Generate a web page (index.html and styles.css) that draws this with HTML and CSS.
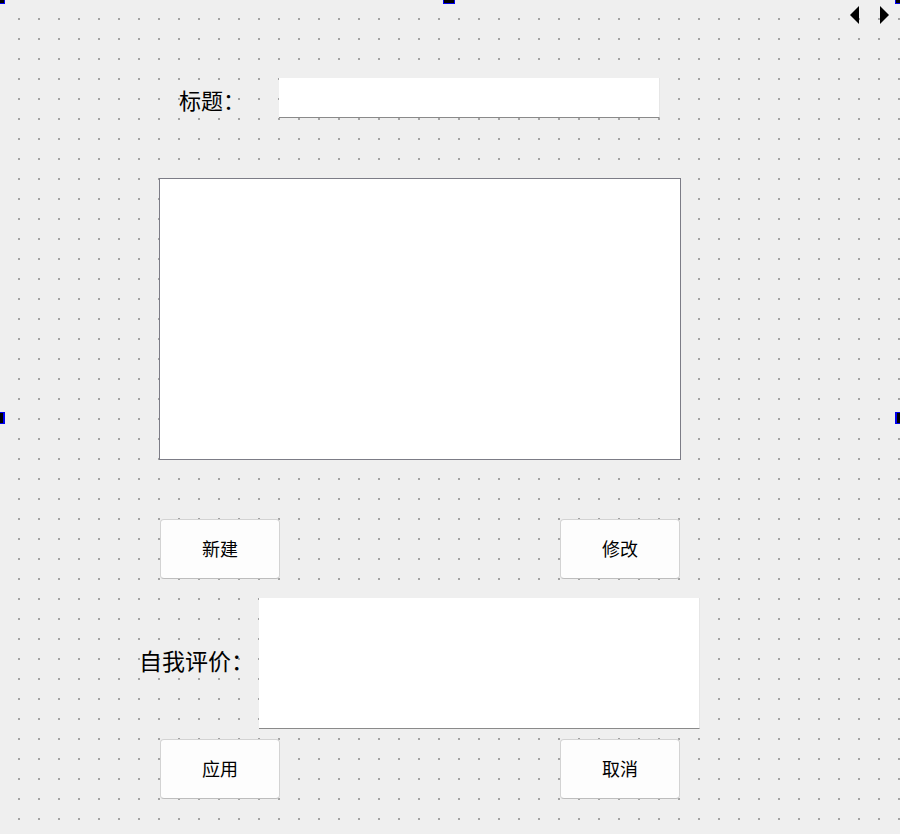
FILE: index.html
```html
<!DOCTYPE html>
<html lang="zh-CN">
<head>
  <meta charset="UTF-8">
  <meta name="viewport" content="width=device-width, initial-scale=1.0">
  <title>Form</title>
  <link rel="stylesheet" href="styles.css">
</head>
<body>
  <div class="canvas">
    <span class="handle handle-tl"></span>
    <span class="handle handle-top"></span>
    <span class="handle handle-tr"></span>
    <span class="handle handle-left"></span>
    <span class="handle handle-right"></span>

    <div class="scroll-arrows">
      <span class="arrow arrow-left"></span>
      <span class="arrow arrow-right"></span>
    </div>

    <div class="title-row">
      <label class="title-label" for="title">标题：</label>
      <input id="title" class="line-edit" type="text">
    </div>

    <textarea class="editor"></textarea>

    <div class="btn-row">
      <button class="push-btn">新建</button>
      <button class="push-btn">修改</button>
    </div>

    <div class="eval-row">
      <label class="eval-label" for="eval">自我评价：</label>
      <textarea id="eval" class="eval-edit"></textarea>
    </div>

    <div class="btn-row btn-row-last">
      <button class="push-btn">应用</button>
      <button class="push-btn">取消</button>
    </div>
  </div>
</body>
</html>
```

FILE: styles.css
```css
body {
  margin: 0;
  font-family: "Noto Sans CJK SC", "Noto Sans", sans-serif;
  color: #000;
  background-color: #efefef;
}

.canvas {
  position: relative;
  width: 900px;
  height: 834px;
  overflow: hidden;
  box-sizing: border-box;
  padding-top: 78px;
  background-color: #efefef;
  background-image: conic-gradient(from 270deg at 2px 2px, #a3a3a3 25%, transparent 0);
  background-size: 20px 20px;
  background-position: 18px 18px;
}

/* designer selection handles */
.handle {
  position: absolute;
  box-sizing: border-box;
  background: #000;
  border: 1px solid #0000f0;
}

.handle-tl {
  left: 0;
  top: 0;
  width: 5px;
  height: 4px;
  border-top: none;
  border-left: none;
}

.handle-top {
  left: 443px;
  top: 0;
  width: 12px;
  height: 4px;
  border-top: none;
}

.handle-tr {
  right: 0;
  top: 0;
  width: 5px;
  height: 4px;
  border-top: none;
  border-right: none;
}

.handle-left {
  left: 0;
  top: 412px;
  width: 5px;
  height: 12px;
  border-left: none;
  border-right-width: 2px;
}

.handle-right {
  right: 0;
  top: 412px;
  width: 5px;
  height: 12px;
  border-right: none;
  border-left-width: 2px;
}

.scroll-arrows {
  position: absolute;
  top: 6px;
  right: 11px;
  display: flex;
  gap: 21px;
}

.arrow {
  width: 0;
  height: 0;
  border-top: 9px solid transparent;
  border-bottom: 9px solid transparent;
}

.arrow-left {
  border-right: 9px solid #000;
}

.arrow-right {
  border-left: 9px solid #000;
}

/* title row */
.title-row {
  display: flex;
  align-items: center;
  height: 40px;
  padding-left: 179px;
}

.title-label {
  width: 100px;
  font-size: 22px;
  line-height: 24px;
  padding-top: 2px;
}

.line-edit {
  width: 381px;
  height: 40px;
  box-sizing: border-box;
  margin: 0;
  background: #fff;
  border: none;
  border-right: 1px solid #e6e6e6;
  border-bottom: 1px solid #8a8a8a;
  outline: none;
}

.editor {
  display: block;
  width: 522px;
  height: 282px;
  box-sizing: border-box;
  margin: 60px 0 0 159px;
  background: #fff;
  border: 1px solid #7c7c86;
  resize: none;
  outline: none;
}

/* push buttons */
.btn-row {
  display: flex;
  gap: 280px;
  padding-left: 160px;
  margin-top: 59px;
}

.btn-row-last {
  margin-top: 10px;
}

.push-btn {
  width: 120px;
  height: 60px;
  box-sizing: border-box;
  margin: 0;
  padding: 0 0 2px;
  background: #fdfdfd;
  border: 1px solid #d3d3d3;
  border-bottom-color: #bdbdbd;
  border-radius: 4px;
  font-family: "Noto Sans CJK SC", "Noto Sans", sans-serif;
  font-size: 18px;
  color: #000;
}

/* self evaluation */
.eval-row {
  display: flex;
  align-items: center;
  padding-left: 139px;
  margin-top: 19px;
}

.eval-label {
  width: 120px;
  font-size: 23px;
  line-height: 24px;
  padding-bottom: 8px;
}

.eval-edit {
  display: block;
  width: 441px;
  height: 131px;
  box-sizing: border-box;
  margin: 0;
  background: #fff;
  border: none;
  border-right: 1px solid #e6e6e6;
  border-bottom: 1px solid #8a8a8a;
  resize: none;
  outline: none;
}
```
